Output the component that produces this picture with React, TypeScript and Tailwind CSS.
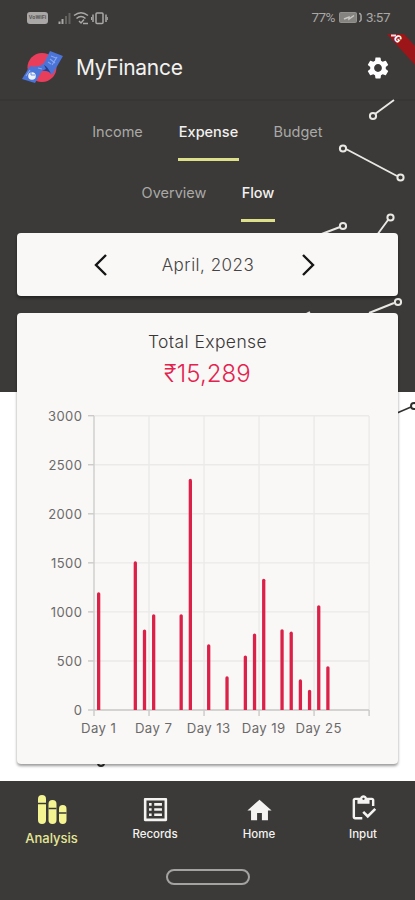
import React from "react";
import { MdSettings, MdHome, MdOutlineListAlt, MdOutlineInventory } from "react-icons/md";

const expenses: [number, number][] = [
  [1, 1200], [5, 1515], [6, 820], [7, 975], [10, 975], [11, 2355], [13, 670], [15, 342],
  [17, 555], [18, 780], [19, 1338], [21, 822], [22, 798], [23, 312], [24, 205], [25, 1068], [26, 445],
];
const axisValues = [0, 500, 1000, 1500, 2000, 2500, 3000];
const axisDays = [1, 7, 13, 19, 25];
const dayX = (day: number) => 77 + (day - 1) * 9.17;
const valueY = (value: number) => 307 - value * 0.0981;

function Chart() {
  return (
    <svg className="block shrink-0" width="381" height="350" viewBox="0 0 381 350" fontFamily="Inter, sans-serif" fontSize="13" fill="#6b6a69">
      {axisValues.map((v) => (
        <g key={v}>
          <path d={`M77 ${valueY(v)}H352`} stroke="#ebeae9" strokeWidth="1.4" />
          <path d={`M71 ${valueY(v)}H77`} stroke="#cbcac9" strokeWidth="1.4" />
          <text x="65.300" y={valueY(v) + 5} textAnchor="end" letterSpacing="0.4">{v}</text>
        </g>
      ))}
      {[1, 7, 13, 19, 25, 31].map((d) => (
        <g key={d}>
          <path d={`M${dayX(d)} 13V307`} stroke={d === 1 ? "#cecdcc" : "#ebeae9"} strokeWidth="1.4" />
          <path d={`M${dayX(d)} 307V313`} stroke="#cbcac9" strokeWidth="1.4" />
        </g>
      ))}
      <path d="M77 307H352" stroke="#cbcac9" strokeWidth="1.4" />
      {expenses.map(([d, v]) => (
        <path key={d} d={`M${dayX(d) + 3} 307V${valueY(v) + 1.5}q0 -1.6 1.65 -1.6t1.65 1.6V307Z`} fill="#dc2149" />
      ))}
      {axisDays.map((d) => (
        <text key={d} x={dayX(d) + 4.6} y="330" textAnchor="middle" fontSize="13.200" letterSpacing="0.4">{`Day ${d}`}</text>
      ))}
    </svg>
  );
}

function BackgroundLines() {
  return (
    <svg className="absolute left-0 top-0" width="415" height="900" viewBox="0 0 415 900" fill="none" strokeWidth="2">
      <path d="M0 100H415" stroke="#343331" strokeWidth="1" />
      <g stroke="#e9e8e4">
        <path d="M375 114L394 100M346 149L397 176M319 235L340 227M377 235L388 220M306 314L310 312M369 313L394 303" strokeWidth="1.9" />
        <circle cx="373" cy="116" r="3.1" /><circle cx="343" cy="148.500" r="3.1" />
        <circle cx="400.500" cy="177.500" r="3.1" /><circle cx="343" cy="226" r="3.1" />
        <circle cx="390.500" cy="217.500" r="3.1" /><circle cx="398" cy="302" r="3.1" />
      </g>
      <g stroke="#30302f">
        <path d="M397 413L411 407" strokeWidth="1.5" /><circle cx="414" cy="406" r="3" />
        <circle cx="101" cy="763" r="3" />
      </g>
    </svg>
  );
}

function StatusBar() {
  return (
    <div className="flex h-[35px] shrink-0 items-center justify-between pl-[27px] pr-[25px] text-[#a9a8a6]">
      <div className="flex h-full items-center">
        <span className="flex h-3 w-[21px] items-center justify-center rounded-[3px] bg-[#a9a8a6] font-['Roboto'] text-[5.5px] font-bold text-[#5a5957]">VoWiFi</span>
        <svg className="ml-[8px]" width="52" height="16" viewBox="0 0 52 16" fill="none" stroke="#a9a8a6" strokeWidth="1.5">
          <path d="M3.500 14V11.500M6.500 14V9" strokeWidth="2" />
          <path d="M10 14V6M13.500 14V3" stroke="#64635f" strokeWidth="2" />
          <path d="M18 5.500Q25 0 32 5.500M20.500 8.500Q25 4.500 29.500 8.500M23 11L25 13L28 9.500" />
          <path d="M27 13.500H32" />
          <rect x="40" y="3" width="7" height="10.500" rx="1" />
          <path d="M37 4.500V12M50 4.500V12" /><path d="M35.500 7V10M51.300 7V10" strokeWidth="1" />
        </svg>
      </div>
      <div className="flex items-center font-['Roboto'] text-[13.5px] tracking-[-0.5px]">
        <span>77%</span>
        <svg className="ml-[4px] mr-[4px]" width="23" height="11" viewBox="0 0 23 11">
          <rect x=".5" y=".5" width="17" height="10" rx="1" fill="#858481" stroke="#93928f" />
          <path d="M5 7L10 5V7L15 3.500" fill="none" stroke="#c8c7c4" strokeWidth="1.500" />
          <path d="M20 1.500Q22.500 1.500 22 5.500Q22.500 9.500 20 9.500" fill="none" stroke="#a9a8a6" strokeWidth="1.500" />
        </svg>
        <span>3:57</span>
      </div>
    </div>
  );
}

function Logo() {
  return (
    <svg width="42" height="34" viewBox="0 0 42 34">
      <circle cx="21" cy="16.500" r="14.500" fill="#e83e5c" />
      <path d="M29 0L42 5L31 24Q27 19 21 20L14 32L1 28L9 15Q18 17 23 12Z" fill="#4a74d8" />
      <path d="M23 14Q27 16 30 23Q27 19 21 20L25 18Z" fill="#233d8c" />
      <path d="M30 5L35 7M29 8L34 12M36 6L31 14M27 11L30 13M17 17L21 18M5 25L9 19" stroke="#86a5ee" strokeWidth="1.200" fill="none" />
      <circle cx="11" cy="25" r="3.800" fill="#edf1fb" />
      <path d="M10 20.500V24H14" fill="none" stroke="#6c8edb" strokeWidth="1" />
    </svg>
  );
}

function Tab({ label, box, active }: { label: string; box: string; active?: boolean }) {
  return (
    <div className={`flex flex-col items-center ${box} ${active ? "text-[#f2f1ef] font-medium" : "text-[#aaa9a7]"}`}>
      <span className="whitespace-nowrap text-[14.5px] leading-5">{label}</span>
      {active && <span className="mt-[16px] h-[3px] w-full bg-[#dde08a]" />}
    </div>
  );
}

function NavItem({ children, label }: { children: React.ReactNode; label: string }) {
  return (
    <div className="flex w-[104px] flex-col items-center text-[#f4f3f1]">
      <div className="flex h-[44px] items-end">{children}</div>
      <span className="mt-px text-[11.5px] font-medium leading-4">{label}</span>
    </div>
  );
}

function AnalysisIcon() {
  return (
    <svg width="30" height="30" viewBox="0 0 30 30">
      <rect x="1" y="0" width="8" height="29" rx="4" fill="#f4f493" />
      <rect x="11.500" y="5" width="8" height="24" rx="4" fill="#f4f493" />
      <rect x="22" y="10" width="7.500" height="19" rx="3.700" fill="#f4f493" />
      <path d="M1 8.500H9M11.500 13.500H19.500M22 18H29.500" stroke="#3b3a38" strokeWidth="1.300" />
    </svg>
  );
}

export default function App() {
  return (
    <div className="relative flex h-[900px] w-[415px] flex-col overflow-hidden bg-[linear-gradient(#3b3a38_392px,#ffffff_392px)] font-['Inter',sans-serif]">
      <BackgroundLines />
      <div className="relative flex flex-1 flex-col">
        <StatusBar />
        <header className="flex h-[65px] shrink-0 items-center pl-[21px] pr-[24px]">
          <Logo />
          <h1 className="ml-[13px] flex-1 text-[21px] font-normal leading-7 tracking-[-0.3px] text-[#f3f2f0]">MyFinance</h1>
          <MdSettings className="text-white" size={26} />
        </header>
        <nav className="flex h-[61px] shrink-0 items-start pl-[92px] pt-[22px]">
          <Tab label="Income" box="w-[51px]" />
          <Tab label="Expense" box="ml-[35px] w-[61px]" active />
          <Tab label="Budget" box="ml-[34px] w-[50px]" />
        </nav>
        <nav className="flex h-[72px] shrink-0 items-start pl-[141px] pt-[22px]">
          <Tab label="Overview" box="w-[66px]" />
          <Tab label="Flow" box="ml-[34px] w-[34px]" active />
        </nav>
        <section className="ml-[17px] flex h-[63px] w-[381px] shrink-0 items-center rounded-[4px] bg-[#f9f8f7] shadow-[0_2px_3px_rgba(0,0,0,0.4)]">
          <svg className="ml-[76px]" width="15" height="24" viewBox="0 0 15 24" fill="none" stroke="#151515" strokeWidth="2.400"><path d="M13 2L3 12L13 22" /></svg>
          <span className="w-[193px] pl-[7px] pt-[2px] text-center text-[17px] font-light tracking-[0.5px] text-[#454443]">April, 2023</span>
          <svg width="15" height="24" viewBox="0 0 15 24" fill="none" stroke="#151515" strokeWidth="2.400"><path d="M2 2L12 12L2 22" /></svg>
        </section>
        <section className="ml-[17px] mt-[17px] flex h-[451px] w-[381px] shrink-0 flex-col items-center rounded-[4px] bg-[#f9f8f7] shadow-[0_2px_3px_rgba(0,0,0,0.4)]">
          <h2 className="mt-[17px] text-[17.5px] font-light leading-6 tracking-[0.4px] text-[#383736]">Total Expense</h2>
          <p className="mt-[4px] text-[24px] font-light leading-8 tracking-[0.1px] text-[#e3224e]">₹15,289</p>
          <div className="mt-[13px]"><Chart /></div>
        </section>
        <footer className="mt-[17px] flex flex-1 flex-col bg-[#3b3a38]">
          <div className="flex h-[88px]">
            <div className="flex w-[103px] flex-col items-center pt-[14px] text-[#e5e796]">
              <AnalysisIcon />
              <span className="mt-[5px] text-[13px] font-medium leading-[17px]">Analysis</span>
            </div>
            <NavItem label="Records"><MdOutlineListAlt size={31} /></NavItem>
            <NavItem label="Home"><MdHome size={29} /></NavItem>
            <NavItem label="Input"><MdOutlineInventory className="mb-[2px]" size={29} /></NavItem>
          </div>
          <div className="ml-[166px] h-4 w-[84px] rounded-full border-2 border-[#a4a3a1]" />
        </footer>
        <div className="absolute right-0 top-[34px] h-9 w-9">
          <svg width="36" height="36" viewBox="0 0 36 36">
            <path d="M8 0H25L36 12V31Z" fill="#9c1518" />
            <path d="M12 1.500H17" stroke="#f4dede" strokeWidth="2" />
          </svg>
          <span className="absolute left-[15px] top-[0px] rotate-45 font-['Roboto'] text-[10px] font-black leading-[10px] text-white">G</span>
        </div>
      </div>
    </div>
  );
}
